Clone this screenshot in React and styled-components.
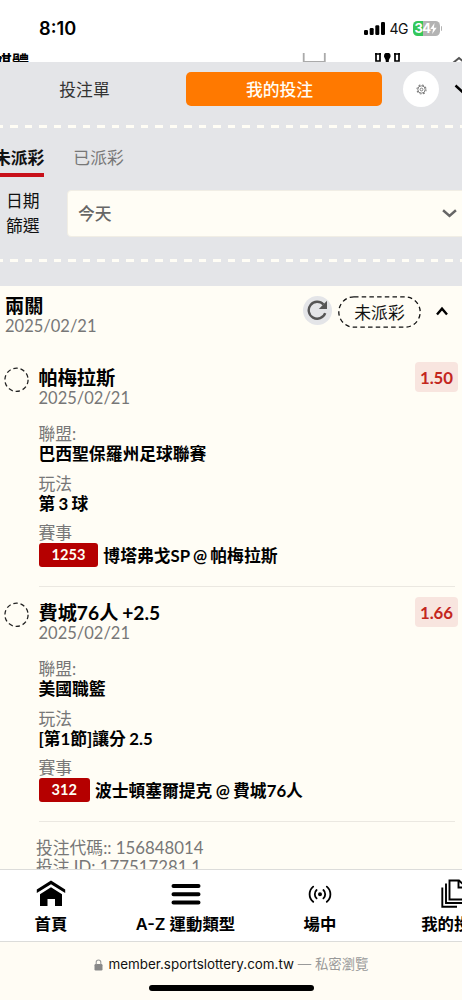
import React from 'react';
import styled, { createGlobalStyle } from 'styled-components';

const GlobalStyle = createGlobalStyle`
    * {
        box-sizing: border-box;
    }
    body {
        margin: 0;
        overflow: hidden;
        background: #fffdf5;
        color: #111;
        font-family: Lato, 'Noto Sans CJK TC', sans-serif;
        font-size: 16.8px;
        -webkit-font-smoothing: antialiased;
    }
`;

const Screen = styled.div`
    display: flex;
    flex-direction: column;
    width: 462px;
    height: 1000px;
    overflow: hidden;
    background: #fffdf5;
`;

const StatusBar = styled.div`
    display: flex;
    align-items: center;
    justify-content: space-between;
    flex: none;
    height: 53px;
    padding: 3px 20px 0 39px;
    background: white;
    font-family: Inter, sans-serif;
`;

const Time = styled.div`
    font-size: 18.2px;
    font-weight: 600;
    color: black;
`;

const StatusIcons = styled.div`
    display: flex;
    align-items: center;
    font-size: 14px;
    & svg {
        display: block;
    }
`;

const Network = styled.span`
    width: 23px;
    padding-left: 5px;
    margin-right: 5px;
    white-space: nowrap;
    letter-spacing: -0.5px;
`;

const Battery = styled.div`
    display: flex;
    align-items: center;
    justify-content: center;
    width: 27px;
    height: 15px;
    border-radius: 4.5px;
    background: linear-gradient(90deg, #34c759 36%, #b3b3b3 36%);
    color: white;
    font-size: 13px;
    font-weight: 700;
    letter-spacing: -0.6px;
`;

const BatteryTip = styled.div`
    width: 1.5px;
    height: 5px;
    margin-left: 1px;
    border-radius: 0 2px 2px 0;
    background: #b3b3b3;
`;

const SiteHeader = styled.div`
    display: flex;
    align-items: flex-start;
    flex: none;
    height: 9px;
    overflow: hidden;
    background: white;
    & svg {
        flex: none;
        display: block;
    }
`;

const SiteTitle = styled.div`
    flex: none;
    width: 303px;
    margin-left: -5px;
    font-size: 17px;
    font-weight: 700;
    line-height: 18px;
    color: black;
`;

const Panel = styled.div`
    display: flex;
    flex-direction: column;
    flex: none;
    height: 224px;
    background: #e4e5e8;
`;

const SlipTabs = styled.div`
    display: flex;
    align-items: center;
    height: 63px;
    padding-bottom: 9px;
`;

const SlipTab = styled.div`
    display: flex;
    align-items: center;
    justify-content: center;
    flex: none;
    width: ${props => props.$active ? '196px' : '170px'};
    height: 34px;
    padding-right: ${props => props.$active ? '9px' : '1px'};
    margin-right: ${props => props.$active ? '21px' : '16px'};
    border-radius: 5px;
    background: ${props => props.$active ? '#ff7900' : 'transparent'};
    color: ${props => props.$active ? '#fffdf5' : '#333'};
    font-weight: ${props => props.$active ? 500 : 400};
`;

const RoundButton = styled.div`
    display: flex;
    align-items: center;
    justify-content: center;
    flex: none;
    width: ${props => props.$size}px;
    height: ${props => props.$size}px;
    border-radius: 50%;
    background: ${props => props.$bg};
`;

const DashedLine = styled.div`
    flex: none;
    height: 3px;
    width: 470px;
    margin-left: -4px;
    background: repeating-linear-gradient(90deg, #fffdf5 0 7.4px, transparent 7.4px 14.5px);
`;

const StatusTabs = styled.div`
    display: flex;
    height: 49px;
    padding-top: 14px;
`;

const StatusTab = styled.div`
    height: 35px;
    margin-left: ${props => props.$active ? '-6px' : '29px'};
    line-height: 31px;
    border-bottom: 4px solid ${props => props.$active ? '#c8101a' : 'transparent'};
    color: ${props => props.$active ? '#111' : '#777'};
    font-weight: ${props => props.$active ? 600 : 400};
`;

const Filter = styled.div`
    display: flex;
    height: 82px;
    padding-top: 13px;
`;

const FilterLabel = styled.div`
    flex: none;
    width: 36px;
    margin: -1px 25px 0 6px;
    line-height: 24.5px;
`;

const Select = styled.div`
    display: flex;
    align-items: center;
    justify-content: space-between;
    flex: none;
    width: 401px;
    height: 47px;
    padding: 0 10px 1px;
    border: 1px solid #f1eee5;
    border-radius: 4px;
    background: #fffdf5;
    color: #666;
    font-weight: 500;
`;

const Content = styled.div`
    display: flex;
    flex-direction: column;
    height: 583px;
    overflow: hidden;
`;

const SlipHeader = styled.div`
    display: flex;
    flex: none;
    height: 66px;
    padding: 10px 13px 0 5px;
`;

const Heading = styled.div`
    height: 20px;
    font-size: 19.2px;
    font-weight: 700;
    line-height: 20px;
    color: black;
    white-space: pre;
    word-spacing: -0.8px;
`;

const DateText = styled.div`
    height: 20px;
    font-size: 16.5px;
    line-height: 20px;
    color: #777;
`;

const SlipActions = styled.div`
    display: flex;
    align-items: flex-start;
    flex: 1;
    justify-content: flex-end;
`;

const Pending = styled.div`
    display: flex;
    align-items: center;
    justify-content: center;
    position: relative;
    width: 83px;
    height: 32px;
    margin: 0 14px 0 6px;
    & svg {
        position: absolute;
        inset: 0;
    }
`;

const Bet = styled.div`
    display: flex;
    flex: none;
    height: 235px;
    padding: 15px 4px 0 4px;
`;

const BetMark = styled.div`
    flex: none;
    width: 34.5px;
`;

const BetBody = styled.div`
    flex: 1;
    height: 220px;
    padding-top: 0.5px;
    margin-right: 3px;
    border-bottom: 1.5px solid #ebe8e1;
`;

const BetTop = styled.div`
    display: flex;
    justify-content: space-between;
    height: 56px;
`;

const Odds = styled.div`
    display: flex;
    align-items: center;
    justify-content: center;
    width: 43px;
    height: 30px;
    margin: -5.5px -3px 0 0;
    border-radius: 4px;
    background: #f8e5df;
    color: #c3271e;
    font-weight: 700;
`;

const Field = styled.div`
    height: ${props => props.$tall ? 50 : 49}px;
    line-height: 20.5px;
`;

const Label = styled.div`
    color: #777;
`;

const Value = styled.div`
    display: flex;
    align-items: center;
    font-weight: 700;
    color: black;
    white-space: pre;
    word-spacing: -0.8px;
`;

const MatchCode = styled.span`
    display: flex;
    align-items: center;
    justify-content: center;
    height: 24px;
    padding: 0 13px;
    margin-right: 5px;
    border-radius: 3px;
    background: #b50000;
    color: #fffdf5;
    font-size: 14.6px;
`;

const MatchName = styled.span`
    padding-top: 2px;
`;

const SlipFooter = styled.div`
    padding: 17px 0 0 36px;
    line-height: 18.5px;
    color: #777;
`;

const Nav = styled.div`
    display: grid;
    grid-template-columns: 102px 167px 102px 166px;
    flex: none;
    height: 73px;
    border-top: 1px solid #dcdcda;
    border-bottom: 1px solid #dcdcda;
    background: white;
`;

const NavItem = styled.div`
    display: flex;
    flex-direction: column;
    align-items: center;
    padding-top: 9px;
    font-family: Inter, 'Noto Sans CJK TC', sans-serif;
    font-size: 16.4px;
    font-weight: 600;
    line-height: 22px;
    color: black;
    white-space: nowrap;
    & svg {
        display: block;
        height: 32px;
        margin-bottom: 2px;
    }
`;

const BrowserBar = styled.div`
    display: flex;
    flex-direction: column;
    align-items: center;
    flex: 1;
    padding-top: 12px;
    background: #fffcf4;
`;

const Address = styled.div`
    display: flex;
    align-items: center;
    height: 21px;
    margin-bottom: 10px;
    font-family: Inter, 'Noto Sans CJK TC', sans-serif;
    font-size: 13.4px;
    line-height: 21px;
    white-space: pre;
    & svg {
        margin-right: 6px;
    }
`;

const Muted = styled.span`
    color: #999;
`;

const HomeIndicator = styled.div`
    width: 165px;
    height: 6px;
    border-radius: 3px;
    background: black;
`;

const Chevron = styled.svg`
    flex: none;
    fill: none;
    stroke: ${props => props.$color};
    stroke-width: ${props => props.$stroke};
    margin-left: ${props => props.$gap || 0}px;
`;

const bets = [
    {
        name: '帕梅拉斯',
        date: '2025/02/21',
        odds: '1.50',
        league: '巴西聖保羅州足球聯賽',
        market: '第 3 球',
        code: '1253',
        match: '博塔弗戈SP @ 帕梅拉斯',
    },
    {
        name: '費城76人 +2.5',
        date: '2025/02/21',
        odds: '1.66',
        league: '美國職籃',
        market: '[第1節]讓分 2.5',
        code: '312',
        match: '波士頓塞爾提克 @ 費城76人',
    },
];

const BetItem = ({ bet }) => (
    <Bet>
        <BetMark>
            <svg width="25" height="26" viewBox="0 0 25 26">
                <circle cx="12.5" cy="12.8" r="11.6" fill="none" stroke="#222" strokeWidth="1.3" strokeDasharray="4.4 2.9" />
            </svg>
        </BetMark>
        <BetBody>
            <BetTop>
                <div>
                    <Heading>{bet.name}</Heading>
                    <DateText>{bet.date}</DateText>
                </div>
                <Odds>{bet.odds}</Odds>
            </BetTop>
            <Field $tall>
                <Label>聯盟:</Label>
                <Value>{bet.league}</Value>
            </Field>
            <Field>
                <Label>玩法</Label>
                <Value>{bet.market}</Value>
            </Field>
            <Field>
                <Label>賽事</Label>
                <Value>
                    <MatchCode>{bet.code}</MatchCode>
                    <MatchName>{bet.match}</MatchName>
                </Value>
            </Field>
        </BetBody>
    </Bet>
);

const App = () => {
    return (
        <Screen>
            <GlobalStyle />
            <StatusBar>
                <Time>8:10</Time>
                <StatusIcons>
                    <svg width="21" height="13" viewBox="0 0 21 13">
                        <rect x="0" y="8" width="4" height="5" rx="1.2" />
                        <rect x="5.7" y="6" width="4" height="7" rx="1.2" />
                        <rect x="11.3" y="3.2" width="4" height="9.8" rx="1.2" />
                        <rect x="17" y="0" width="4" height="13" rx="1.2" />
                    </svg>
                    <Network>4G</Network>
                    <Battery>
                        34
                        <svg width="7" height="11" viewBox="0 0 7 11" fill="white">
                            <path d="M4.5 0 L0.3 6 H3 L2.2 11 L6.7 4.7 H3.9 Z" />
                        </svg>
                    </Battery>
                    <BatteryTip />
                </StatusIcons>
            </StatusBar>

            <SiteHeader>
                <SiteTitle>媒體</SiteTitle>
                <svg width="164" height="9" viewBox="0 0 164 9" fill="none">
                    <path d="M5.7 0 V9 H26.8 V0" stroke="#aaa" strokeWidth="1.8" />
                    <path d="M78 0 V8 H82 V0 M97 0 V8 H101 V0 M77 1 H83 M96 1 H102" stroke="black" strokeWidth="1.7" />
                    <path d="M86 3 A3.3 3.3 0 0 1 92.6 3 C92.6 5 90.8 5.5 90.8 9 H87.8 C87.8 5.5 86 5 86 3 Z" fill="black" />
                    <path d="M155 10 L161 5 L167 10" stroke="#555" strokeWidth="2" />
                </svg>
            </SiteHeader>

            <Panel>
                <SlipTabs>
                    <SlipTab>投注單</SlipTab>
                    <SlipTab $active>我的投注</SlipTab>
                    <RoundButton $size={36} $bg="white">
                        <svg width="11" height="11" viewBox="0 0 12 12" fill="none" stroke="#777" strokeWidth="1">
                            <circle cx="6" cy="6" r="4" />
                            <circle cx="6" cy="6" r="1.5" />
                            <circle cx="6" cy="6" r="5" strokeDasharray="2 1.93" strokeWidth="1.1" />
                        </svg>
                    </RoundButton>
                    <Chevron width="16" height="10" viewBox="0 0 16 10" $color="black" $stroke={2.4} $gap={15}>
                        <path d="M1.5 1.5 L8 7.5 L14.5 1.5" />
                    </Chevron>
                </SlipTabs>
                <DashedLine />
                <StatusTabs>
                    <StatusTab $active>未派彩</StatusTab>
                    <StatusTab>已派彩</StatusTab>
                </StatusTabs>
                <Filter>
                    <FilterLabel>日期<br />篩選</FilterLabel>
                    <Select>
                        今天
                        <Chevron width="15" height="9" viewBox="0 0 14 8" $color="#666" $stroke={2.3}>
                            <path d="M1 1 L7 6.3 L13 1" />
                        </Chevron>
                    </Select>
                </Filter>
                <DashedLine />
            </Panel>

            <Content>
                <SlipHeader>
                    <div>
                        <Heading>兩關</Heading>
                        <DateText>2025/02/21</DateText>
                    </div>
                    <SlipActions>
                        <RoundButton $size={29} $bg="#e4e5e8">
                            <svg width="21" height="21" viewBox="0 0 21 21" fill="none">
                                <path d="M18.2 13.2 A8.5 8.5 0 1 1 16.5 4.5" stroke="#555" strokeWidth="2.4" />
                                <path d="M20 0.8 V9 H11.8 Z" fill="#555" />
                            </svg>
                        </RoundButton>
                        <Pending>
                            <svg width="83" height="32" viewBox="0 0 83 32">
                                <rect x="0.8" y="0.8" width="81.4" height="30.4" rx="15.2" fill="none" stroke="#111" strokeWidth="1.3" strokeDasharray="4.5 3.2" />
                            </svg>
                            未派彩
                        </Pending>
                        <Chevron width="14" height="32" viewBox="0 0 14 32" $color="black" $stroke={2.4}>
                            <path d="M2 18.5 L7 12.7 L12 18.5" />
                        </Chevron>
                    </SlipActions>
                </SlipHeader>
                {bets.map(bet => <BetItem key={bet.code} bet={bet} />)}
                <SlipFooter>
                    <div>投注代碼:: 156848014</div>
                    <div>投注 ID: 177517281.1</div>
                </SlipFooter>
            </Content>

            <Nav>
                <NavItem>
                    <svg width="30" height="32" viewBox="0 0 30 32">
                        <path d="M0.8 14 V10.4 L15 1.5 L29.2 10.4 V14 L15 5.2 Z" />
                        <path d="M4 15.3 L15 8.3 L26 15.3 V27 H19 V20 H11.5 V27 H4 Z" />
                    </svg>
                    首頁
                </NavItem>
                <NavItem>
                    <svg width="30" height="32" viewBox="0 0 30 32" stroke="black" strokeWidth="4" strokeLinecap="round">
                        <path d="M2.5 7 H27.5 M2.5 15.2 H27.5 M2.5 23.4 H27.5" />
                    </svg>
                    A-Z 運動類型
                </NavItem>
                <NavItem>
                    <svg width="24" height="32" viewBox="0 0 24 32" fill="none" stroke="black" strokeWidth="1.8" strokeLinecap="round">
                        <circle cx="12" cy="15.2" r="1.1" fill="black" />
                        <path d="M8.6 11 C6.2 13.2 6.2 17.2 8.6 19.4 M15.4 11 C17.8 13.2 17.8 17.2 15.4 19.4 M5.2 7.6 C0.4 11.6 0.4 18.8 5.2 22.8 M18.8 7.6 C23.6 11.6 23.6 18.8 18.8 22.8" />
                    </svg>
                    場中
                </NavItem>
                <NavItem>
                    <svg width="27" height="32" viewBox="0 0 27 32" fill="none" stroke="black" strokeWidth="1.9">
                        <path d="M8.5 1.5 H18 L26 9 V20.5 H8.5 Z M17.5 1.5 V8.5 H26" />
                        <path d="M5 4.5 V24 H23 M1.3 8.5 V27.7 H16" />
                    </svg>
                    我的投注
                </NavItem>
            </Nav>

            <BrowserBar>
                <Address>
                    <svg width="9" height="12" viewBox="0 0 9 12">
                        <rect x="0.5" y="5" width="8" height="6.5" rx="1.2" fill="#888" />
                        <path d="M2.2 5.5 V3.3 A2.3 2.3 0 0 1 6.8 3.3 V5.5" fill="none" stroke="#999" strokeWidth="1.1" />
                    </svg>
                    member.sportslottery.com.tw<Muted> — 私密瀏覽</Muted>
                </Address>
                <HomeIndicator />
            </BrowserBar>
        </Screen>
    );
}

export default App;
